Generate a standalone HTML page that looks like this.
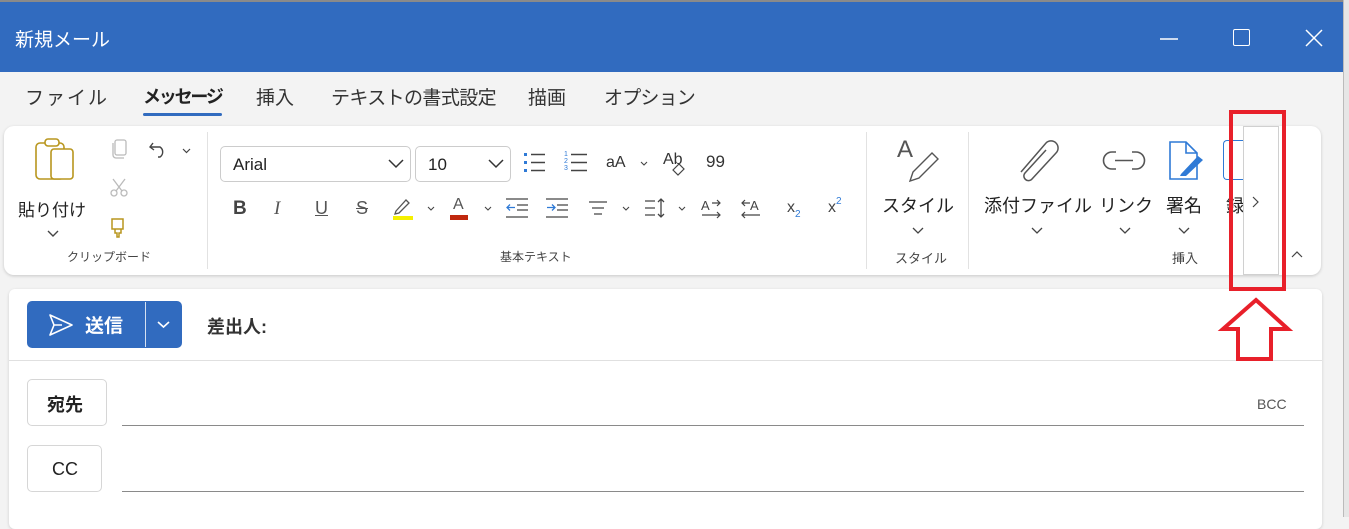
<!DOCTYPE html>
<html><head><meta charset="utf-8"><style>
*{margin:0;padding:0;box-sizing:border-box}
body{width:1349px;height:517px;overflow:hidden;background:#f3f3f3;font-family:"Liberation Sans","Noto Sans CJK JP",sans-serif;color:#333;position:relative}
.a{position:absolute}
.t{position:absolute;white-space:nowrap}
svg{position:absolute;overflow:visible}
</style></head><body>
<div class="a" style="left:0;top:0;width:1349px;height:3px;background:#8a8a8a"></div>
<div class="a" style="left:0;top:2px;width:1343px;height:70px;background:#316bbf"></div>
<div class="t" style="left:15px;top:25px;font-size:19px;color:#fff">新規メール</div>
<svg style="left:1160px;top:38px" width="20" height="2"><line x1="0" y1="1" x2="18" y2="1" stroke="#fff" stroke-width="1.5"/></svg>
<div class="a" style="left:1233px;top:29px;width:17px;height:17px;border:1.5px solid #fff;border-radius:2px"></div>
<svg style="left:1305px;top:29px" width="18" height="18"><path d="M1 1L17 17M17 1L1 17" stroke="#fff" stroke-width="1.5"/></svg>
<div class="a" style="left:1343px;top:0;width:6px;height:517px;background:#e6e6e6;border-left:1px solid #bbb"></div>

<div class="t" style="left:25px;top:83px;font-size:19px;color:#333;letter-spacing:2px">ファイル</div>
<div class="t" style="left:143px;top:83px;font-size:18px;color:#222;font-weight:bold;letter-spacing:-2.2px">メッセージ</div>
<div class="a" style="left:143px;top:113px;width:79px;height:3px;background:#316bbf;border-radius:2px"></div>
<div class="t" style="left:256px;top:83px;font-size:19px">挿入</div>
<div class="t" style="left:331px;top:83px;font-size:19px;letter-spacing:-0.6px">テキストの書式設定</div>
<div class="t" style="left:528px;top:83px;font-size:19px">描画</div>
<div class="t" style="left:604px;top:83px;font-size:19px;letter-spacing:-0.8px">オプション</div>

<div class="a" style="left:4px;top:126px;width:1317px;height:149px;background:#fff;border-radius:10px;box-shadow:0 1px 3px rgba(0,0,0,.18)"></div>
<svg style="left:34px;top:137px" width="42" height="45"><rect x="2" y="6" width="28" height="36" rx="4" fill="none" stroke="#b8961e" stroke-width="1.6"/><rect x="11" y="2" width="14" height="7" rx="3" fill="#fff" stroke="#b8961e" stroke-width="1.6"/><rect x="17" y="12" width="22" height="30" rx="3" fill="#fff" stroke="#b8961e" stroke-width="1.6"/></svg>
<div class="t" style="left:18px;top:196px;font-size:17px;color:#222">貼り付け</div>
<svg style="left:47px;top:230px" width="12" height="8"><path d="M1 1L6 6L11 1" fill="none" stroke="#444" stroke-width="1.4"/></svg>
<svg style="left:110px;top:138px" width="18" height="22"><rect x="5" y="2" width="11" height="15" rx="2" fill="none" stroke="#bbb" stroke-width="1.3"/><path d="M3 5v12a3 3 0 0 0 3 3h8" fill="none" stroke="#bbb" stroke-width="1.3"/></svg>
<svg style="left:110px;top:178px" width="18" height="20"><circle cx="4" cy="15" r="3" fill="none" stroke="#bbb" stroke-width="1.3"/><circle cx="14" cy="15" r="3" fill="none" stroke="#bbb" stroke-width="1.3"/><path d="M3 1L12 13M15 1L6 13" stroke="#bbb" stroke-width="1.3"/></svg>
<svg style="left:110px;top:217px" width="16" height="22"><rect x="2" y="2" width="11" height="10" fill="none" stroke="#b8961e" stroke-width="1.5"/><path d="M5 12v4h2v4h2v-4h2v-4" fill="none" stroke="#b8961e" stroke-width="1.5"/></svg>
<svg style="left:148px;top:140px" width="22" height="20"><path d="M5 3L2 7L6 10M2 7h10a6 6 0 0 1 0 10h-2" fill="none" stroke="#444" stroke-width="1.4"/></svg>
<svg style="left:182px;top:148px" width="10" height="6"><path d="M1 1L4.5 4.5L8 1" fill="none" stroke="#444" stroke-width="1.2"/></svg>
<div class="t" style="left:67px;top:248px;font-size:12px;color:#444">クリップボード</div>
<div class="a" style="left:207px;top:132px;width:1px;height:137px;background:#e2e2e2"></div>
<div class="a" style="left:220px;top:146px;width:191px;height:36px;border:1px solid #ccc;border-radius:5px"></div>
<div class="t" style="left:233px;top:155px;font-size:17px;color:#222">Arial</div>
<svg style="left:388px;top:159px" width="16" height="10"><path d="M1 1L8 8L15 1" fill="none" stroke="#333" stroke-width="1.5"/></svg>
<div class="a" style="left:415px;top:146px;width:96px;height:36px;border:1px solid #ccc;border-radius:5px"></div>
<div class="t" style="left:428px;top:155px;font-size:17px;color:#222">10</div>
<svg style="left:488px;top:159px" width="16" height="10"><path d="M1 1L8 8L15 1" fill="none" stroke="#333" stroke-width="1.5"/></svg>
<svg style="left:524px;top:152px" width="24" height="22"><rect x="0" y="1" width="3" height="3" fill="#2f7ad6"/><rect x="0" y="9" width="3" height="3" fill="#2f7ad6"/><rect x="0" y="17" width="3" height="3" fill="#2f7ad6"/><path d="M7 2.5h14M7 10.5h14M7 18.5h14" stroke="#444" stroke-width="1.4"/></svg>
<div class="t" style="left:564px;top:151px;font-size:7px;line-height:7px;color:#2f7ad6">1<br>2<br>3</div>
<svg style="left:570px;top:152px" width="20" height="22"><path d="M1 2.5h16M1 10.5h16M1 18.5h16" stroke="#444" stroke-width="1.4"/></svg>
<div class="t" style="left:606px;top:154px;font-size:16px;color:#333">aA</div>
<svg style="left:640px;top:161px" width="8" height="5"><path d="M1 1L4 4L7 1" fill="none" stroke="#444" stroke-width="1.1"/></svg>
<div class="t" style="left:663px;top:151px;font-size:16px;color:#333">Ab</div>
<svg style="left:671px;top:162px" width="16" height="14"><path d="M2 8L8 2L13 7L7 13Z" fill="#fff" stroke="#444" stroke-width="1.2"/></svg>
<div class="t" style="left:706px;top:152px;font-size:17px;color:#333">99</div>
<div class="t" style="left:233px;top:198px;font-size:19px;font-weight:bold;color:#444">B</div>
<div class="t" style="left:274px;top:198px;font-size:19px;font-style:italic;color:#555;font-family:'Liberation Serif',serif">I</div>
<div class="t" style="left:315px;top:198px;font-size:18px;color:#555;text-decoration:underline">U</div>
<div class="t" style="left:356px;top:198px;font-size:18px;color:#555;text-decoration:line-through">S</div>
<svg style="left:392px;top:197px" width="22" height="24"><path d="M4 14L14 3L17 6L7 16L3 17Z" fill="none" stroke="#555" stroke-width="1.3"/><rect x="1" y="19" width="20" height="4" fill="#f5f000"/></svg>
<svg style="left:427px;top:206px" width="8" height="5"><path d="M1 1L4 4L7 1" fill="none" stroke="#444" stroke-width="1.1"/></svg>
<div class="t" style="left:453px;top:196px;font-size:16px;color:#555">A</div>
<div class="a" style="left:450px;top:215px;width:18px;height:5px;background:#c0280e"></div>
<svg style="left:484px;top:206px" width="8" height="5"><path d="M1 1L4 4L7 1" fill="none" stroke="#444" stroke-width="1.1"/></svg>
<svg style="left:505px;top:197px" width="24" height="22"><path d="M1 2h22M12 8h11M12 13h11M1 20h22" stroke="#444" stroke-width="1.3"/><path d="M10 10.5H2M5 7.5L2 10.5L5 13.5" fill="none" stroke="#2f7ad6" stroke-width="1.3"/></svg>
<svg style="left:545px;top:197px" width="24" height="22"><path d="M1 2h22M12 8h11M12 13h11M1 20h22" stroke="#444" stroke-width="1.3"/><path d="M2 10.5H10M7 7.5L10 10.5L7 13.5" fill="none" stroke="#2f7ad6" stroke-width="1.3"/></svg>
<svg style="left:588px;top:200px" width="20" height="16"><path d="M1 2h18M4 8h12M6 14h8" stroke="#444" stroke-width="1.3"/></svg>
<svg style="left:622px;top:206px" width="8" height="5"><path d="M1 1L4 4L7 1" fill="none" stroke="#444" stroke-width="1.1"/></svg>
<svg style="left:644px;top:197px" width="24" height="22"><path d="M1 4h10M1 11h10M1 18h10" stroke="#444" stroke-width="1.3"/><path d="M17 2v18M14 5l3-3l3 3M14 17l3 3l3-3" fill="none" stroke="#444" stroke-width="1.3"/></svg>
<svg style="left:678px;top:206px" width="8" height="5"><path d="M1 1L4 4L7 1" fill="none" stroke="#444" stroke-width="1.1"/></svg>
<div class="t" style="left:701px;top:198px;font-size:13px;color:#444">A</div>
<svg style="left:701px;top:199px" width="22" height="20"><path d="M11 4h8M16 1l3 3l-3 3M1 16h18M16 13l3 3l-3 3" fill="none" stroke="#444" stroke-width="1.2"/></svg>
<div class="t" style="left:750px;top:198px;font-size:13px;color:#444">A</div>
<svg style="left:741px;top:199px" width="22" height="20"><path d="M1 4h8M4 1l-3 3l3 3M1 16h18M4 13l-3 3l3 3" fill="none" stroke="#444" stroke-width="1.2"/></svg>
<div class="t" style="left:787px;top:199px;font-size:16px;color:#444">x<span style="font-size:10px;color:#2f7ad6;vertical-align:-5px">2</span></div>
<div class="t" style="left:828px;top:196px;font-size:16px;color:#444">x<span style="font-size:10px;color:#2f7ad6;vertical-align:8px">2</span></div>
<div class="t" style="left:500px;top:248px;font-size:12px;color:#444">基本テキスト</div>
<div class="a" style="left:866px;top:132px;width:1px;height:137px;background:#e2e2e2"></div>
<div class="t" style="left:897px;top:136px;font-size:24px;color:#555">A</div>
<svg style="left:905px;top:150px" width="34" height="34"><path d="M27 3L33 9L14 28L5 31L8 22Z" fill="none" stroke="#555" stroke-width="1.4"/></svg>
<div class="t" style="left:882px;top:192px;font-size:18px;color:#222">スタイル</div>
<svg style="left:912px;top:227px" width="12" height="8"><path d="M1 1L6 6L11 1" fill="none" stroke="#444" stroke-width="1.3"/></svg>
<div class="t" style="left:895px;top:248px;font-size:13px;color:#444">スタイル</div>
<div class="a" style="left:968px;top:132px;width:1px;height:137px;background:#e2e2e2"></div>
<svg style="left:1015px;top:138px" width="48" height="46"><path d="M8 38L33 9a7 7 0 0 1 10 10L19 45a4.5 4.5 0 0 1-7-6L33 16" fill="none" stroke="#555" stroke-width="1.5" transform="translate(-2,-4)"/></svg>
<div class="t" style="left:984px;top:192px;font-size:18px;color:#222">添付ファイル</div>
<svg style="left:1031px;top:227px" width="12" height="8"><path d="M1 1L6 6L11 1" fill="none" stroke="#444" stroke-width="1.3"/></svg>
<svg style="left:1102px;top:150px" width="44" height="22"><path d="M14 2H10a8.5 8.5 0 0 0 0 17h4M30 2h4a8.5 8.5 0 0 1 0 17h-4M13 10.5h18" fill="none" stroke="#555" stroke-width="1.6"/></svg>
<div class="t" style="left:1099px;top:192px;font-size:18px;color:#222">リンク</div>
<svg style="left:1119px;top:227px" width="12" height="8"><path d="M1 1L6 6L11 1" fill="none" stroke="#444" stroke-width="1.3"/></svg>
<svg style="left:1167px;top:140px" width="38" height="42"><path d="M3 2h16l11 11v26H3Z" fill="#fff" stroke="#2f7ad6" stroke-width="1.6"/><path d="M19 2v11h11" fill="none" stroke="#2f7ad6" stroke-width="1.6"/><path d="M14 34L31 16L36 20L19 36L13 36Z" fill="#2f7ad6"/></svg>
<div class="t" style="left:1166px;top:192px;font-size:18px;color:#222">署名</div>
<svg style="left:1178px;top:227px" width="12" height="8"><path d="M1 1L6 6L11 1" fill="none" stroke="#444" stroke-width="1.3"/></svg>
<div class="t" style="left:1172px;top:248px;font-size:13px;color:#444">挿入</div>
<div class="a" style="left:1223px;top:140px;width:22px;height:40px;border:1.5px solid #2f7ad6;border-right:none;border-radius:4px 0 0 4px"></div>
<div class="t" style="left:1226px;top:192px;font-size:18px;color:#222">録</div>
<div class="a" style="left:1243px;top:126px;width:36px;height:149px;background:#fff;border:1px solid #d0d0d0"></div>
<svg style="left:1252px;top:196px" width="8" height="12"><path d="M1 1L6 6L1 11" fill="none" stroke="#444" stroke-width="1.2"/></svg>
<svg style="left:1291px;top:251px" width="12" height="8"><path d="M1 6L6 1L11 6" fill="none" stroke="#444" stroke-width="1.2"/></svg>

<div class="a" style="left:9px;top:289px;width:1313px;height:240px;background:#fff;border-radius:6px;box-shadow:0 1px 3px rgba(0,0,0,.15)"></div>
<div class="a" style="left:27px;top:301px;width:155px;height:47px;background:#316bbf;border-radius:5px"></div>
<div class="a" style="left:145px;top:302px;width:1px;height:45px;background:#fff;opacity:.8"></div>
<svg style="left:48px;top:313px" width="26" height="24"><path d="M2 2L24 12L2 22L6 12Z M6 12H14" fill="none" stroke="#fff" stroke-width="1.6" stroke-linejoin="round"/></svg>
<div class="t" style="left:85px;top:311px;font-size:19px;color:#fff;font-weight:bold">送信</div>
<svg style="left:157px;top:321px" width="13" height="8"><path d="M1 1L6.5 6L12 1" fill="none" stroke="#fff" stroke-width="1.6"/></svg>
<div class="t" style="left:207px;top:313px;font-size:18px;color:#333;font-weight:bold">差出人:</div>
<div class="a" style="left:9px;top:360px;width:1313px;height:1px;background:#e0e0e0"></div>
<div class="a" style="left:27px;top:379px;width:80px;height:47px;border:1px solid #d6d6d6;border-radius:5px"></div>
<div class="t" style="left:47px;top:391px;font-size:18px;font-weight:bold;color:#222">宛先</div>
<div class="a" style="left:122px;top:425px;width:1182px;height:1px;background:#8a8a8a"></div>
<div class="t" style="left:1257px;top:396px;font-size:14px;color:#555">BCC</div>
<div class="a" style="left:27px;top:445px;width:75px;height:47px;border:1px solid #d6d6d6;border-radius:5px"></div>
<div class="t" style="left:52px;top:459px;font-size:18px;color:#222">CC</div>
<div class="a" style="left:122px;top:491px;width:1182px;height:1px;background:#8a8a8a"></div>

<div class="a" style="left:1229px;top:110px;width:57px;height:181px;border:4px solid #e8202a"></div>
<svg style="left:1220px;top:297px" width="72" height="66"><path d="M36 3L68 32H51V62H18V32H3Z" fill="none" stroke="#e8202a" stroke-width="4" stroke-linejoin="miter"/></svg>
</body></html>
